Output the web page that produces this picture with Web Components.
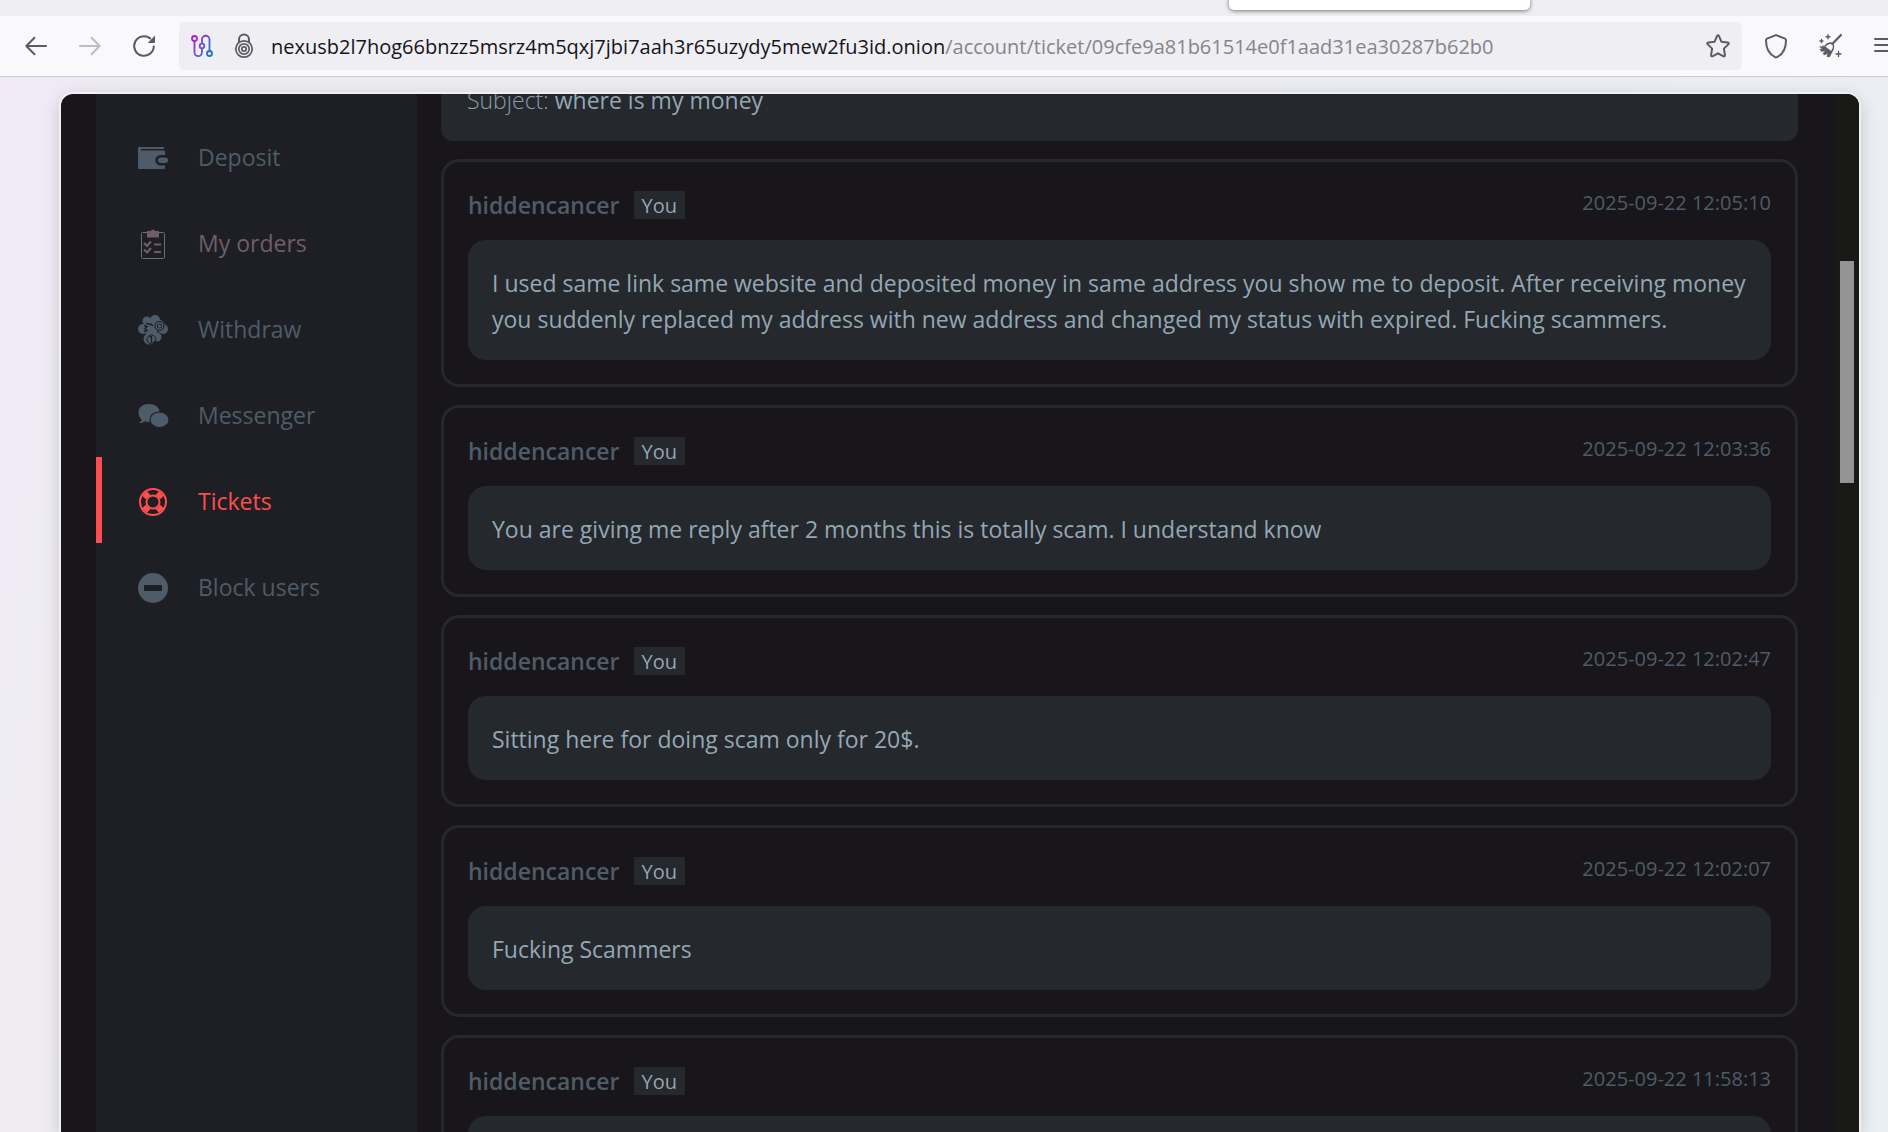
<!DOCTYPE html>
<html lang="en">
<head>
<meta charset="utf-8">
<meta name="viewport" content="width=device-width, initial-scale=1">
<title>Ticket</title>
<style>
    html, body {
        margin: 0;
        height: 100%;
        overflow: hidden;
    }
    body {
        font-family: "Open Sans", "Noto Sans", sans-serif;
        font-size: 23px;
        line-height: 36px;
    }
</style>
</head>
<body>
<browser-window>
    <browser-toolbar slot="toolbar" host="nexusb2l7hog66bnzz5msrz4m5qxj7jbi7aah3r65uzydy5mew2fu3id.onion" path="/account/ticket/09cfe9a81b61514e0f1aad31ea30287b62b0"></browser-toolbar>
    <account-panel>
        <side-menu slot="menu">
            <menu-item icon="wallet" href="#deposit">Deposit</menu-item>
            <menu-item icon="orders" href="#orders" visited>My orders</menu-item>
            <menu-item icon="coins" href="#withdraw">Withdraw</menu-item>
            <menu-item icon="chat" href="#messenger">Messenger</menu-item>
            <menu-item icon="ring" href="#tickets" active>Tickets</menu-item>
            <menu-item icon="block" href="#block">Block users</menu-item>
        </side-menu>
        <ticket-subject>where is my money</ticket-subject>
        <ticket-message author="hiddencancer" date="2025-09-22 12:05:10">I used same link same website and deposited money in same address you show me to deposit. After receiving money you suddenly replaced my address with new address and changed my status with expired. Fucking scammers.</ticket-message>
        <ticket-message author="hiddencancer" date="2025-09-22 12:03:36">You are giving me reply after 2 months this is totally scam. I understand know</ticket-message>
        <ticket-message author="hiddencancer" date="2025-09-22 12:02:47">Sitting here for doing scam only for 20$.</ticket-message>
        <ticket-message author="hiddencancer" date="2025-09-22 12:02:07">Fucking Scammers</ticket-message>
        <ticket-message author="hiddencancer" date="2025-09-22 11:58:13"></ticket-message>
    </account-panel>
</browser-window>

<script>
const icons = {
    back: `<svg width="24" height="24" viewBox="0 0 24 24" fill="none" stroke="currentColor" stroke-width="2" stroke-linecap="round" stroke-linejoin="round"><path d="M22 12H2.500M10.500 3.800L2.300 12l8.200 8.200"/></svg>`,
    forward: `<svg width="24" height="24" viewBox="0 0 24 24" fill="none" stroke="currentColor" stroke-width="2" stroke-linecap="round" stroke-linejoin="round"><path d="M2 12h19.500M13.500 3.800l8.200 8.200-8.200 8.200"/></svg>`,
    reload: `<svg width="24" height="24" viewBox="0 0 24 24"><path d="M21.800 12.500A9.800 9.800 0 1 1 18.200 4.400" fill="none" stroke="currentColor" stroke-width="2" stroke-linecap="round"/><path d="M23 1.500v6.700a.8.8 0 0 1-.8.800h-6.500z" fill="currentColor"/></svg>`,
    circuit: `<svg width="24" height="24" viewBox="0 0 24 24" fill="none" stroke="url(#g)" stroke-width="1.800"><defs><linearGradient id="g" gradientUnits="userSpaceOnUse" x1="2" y1="3" x2="23" y2="21"><stop offset="0" stop-color="#c010d0"/><stop offset=".5" stop-color="#6a55d4"/><stop offset="1" stop-color="#087fae"/></linearGradient></defs><circle cx="4.500" cy="4.500" r="2.500"/><circle cx="12" cy="12" r="2.300"/><circle cx="19.500" cy="19.500" r="2.500"/><path d="M4.500 7v11.500a3.700 3.700 0 0 0 7.400 0V14.300M12 9.700V5.500a3.700 3.700 0 0 1 7.500 0V17"/></svg>`,
    onion: `<svg width="20" height="26" viewBox="0 0 20 26" fill="none" stroke="currentColor" stroke-width="1.700"><path d="M5 9V6.500a5 5 0 0 1 10 0V9" stroke-width="2"/><circle cx="10" cy="16" r="8.200"/><circle cx="10" cy="16" r="5.200"/><circle cx="10" cy="16" r="2.200"/></svg>`,
    star: `<svg width="24" height="24" viewBox="0 0 24 24" fill="none" stroke="currentColor" stroke-width="2" stroke-linejoin="round"><path d="M11 2.200Q12 .4 13 2.200L15.500 7.800 21.600 8.500Q23.600 9 22.200 10.400L17.900 14.600 18.900 20.900Q19 23 17.100 22.200L12 19.300 6.900 22.200Q5 23 5.100 20.900L6.100 14.600 1.800 10.400Q.4 9 2.400 8.500L8.500 7.800z"/></svg>`,
    shield: `<svg width="24" height="26" viewBox="0 0 24 26" fill="none" stroke="currentColor" stroke-width="2" stroke-linejoin="round"><path d="M11.200 2.300Q12 1.900 12.800 2.300L21 5.700Q22 6.200 22 7.300C22 15 19.500 21 12.900 24.200Q12 24.600 11.100 24.200C4.500 21 2 15 2 7.300Q2 6.200 3 5.700z"/></svg>`,
    broom: `<svg width="26" height="26" viewBox="0 0 26 26" fill="none" stroke="currentColor" stroke-linecap="round" stroke-linejoin="round"><path d="M24 2L15.500 10.800" stroke-width="2.200"/><path d="M8.500 12.500C11 9.800 14 9.600 15.500 11s1.300 4.700-1 7.800" stroke-width="1.600"/><path d="M7.500 13l7.500 6-2.500 5-2.500-.5.800-3.500-3.300 2-1.500-1.500 2.500-3L4.500 18.500 3 16.500l2.500-1L3 14z" fill="currentColor" stroke-width=".6"/><path d="M11 1.800v4M9 3.800h4M4.500 6.500v3M3 8h3M21.500 18.500v5M19 21h5" stroke-width="1.400"/></svg>`,
    menu: `<svg width="22" height="24" viewBox="0 0 22 24" fill="none" stroke="currentColor" stroke-width="2" stroke-linecap="round"><path d="M2 5h18M2 11h18M2 17h18"/></svg>`,
    wallet: `<svg width="32" height="32" viewBox="0 0 32 32" fill="currentColor"><path d="M2 5h25v2H4v1.500h23q1 0 1 1V13h-4.500a5.200 5.200 0 0 0 0 10.400H28V26q0 1-1 1H2q-1 0-1-1V6q0-1 1-1z"/><rect x="21" y="15.500" width="10" height="5.500" rx="2.750"/></svg>`,
    orders: `<svg width="32" height="32" viewBox="0 0 32 32" fill="none"><rect x="4.500" y="4.500" width="23" height="26" rx="1" stroke="#5f717f"/><path d="M10 3h4q0-1.500 2-1.500T18 3h4v6.500H10z" fill="currentColor"/><path d="M7 15l3 3 4-4.500M7 21.500l3 3 4-4.500M17 16.500h7M17 24h7" stroke="currentColor" stroke-width="2.200"/></svg>`,
    coins: `<svg width="32" height="32" viewBox="0 0 32 32" fill="currentColor"><circle cx="10" cy="7" r="4.500"/><circle cx="18" cy="6" r="5"/><circle cx="6" cy="15" r="5"/><circle cx="26" cy="15" r="5"/><circle cx="22.500" cy="11" r="5"/><circle cx="14" cy="16" r="6.500"/><circle cx="20" cy="23" r="4.500"/><circle cx="12" cy="25" r="5.500"/><g fill="none" stroke="#1e1f24"><circle cx="22.500" cy="12" r="4.500" stroke-width="1.200"/><circle cx="22.500" cy="12" r="2.200"/><path d="M9 9.500l5 1 2 1M7 11.500l3 1-2 2 2 2-3 1M14.500 22v7M12.500 23.500l2-1.500" stroke-width="1.400"/><circle cx="14.500" cy="25.500" r="4.500"/></g></svg>`,
    chat: `<svg width="32" height="32" viewBox="0 0 32 32" fill="currentColor"><path d="M12 4c6 0 10.500 3.500 10.500 8S18 22 12 22c-1.500 0-3-.2-4-.7-1.500 1.500-4 2-6.500 1.700 2-.8 3-2 3-3.500C2.500 17.500 1.500 15 1.500 12 1.500 7.500 6 4 12 4z"/><path d="M22.500 12c5.500 0 9.500 3.400 9.500 7.700s-4 7.900-9.500 7.900-9.500-3.600-9.500-7.900 4-7.700 9.500-7.700z" stroke="#1e1f24" stroke-width="1.200"/></svg>`,
    ring: `<svg width="32" height="32" viewBox="0 0 32 32" fill="none" stroke="currentColor"><circle cx="16" cy="16" r="13" stroke-width="2"/><circle cx="16" cy="16" r="6.500" stroke-width="2"/><path d="M11 11L7.500 7.500M21 11l3.500-3.500M11 21l-3.500 3.500M21 21l3.500 3.500" stroke-width="6.500"/></svg>`,
    block: `<svg width="32" height="32" viewBox="0 0 32 32"><circle cx="16" cy="16" r="15" fill="currentColor"/><path d="M7 13h18v6H7z" fill="#1e1f24"/></svg>`
};

class BrowserWindow extends HTMLElement {
    constructor() {
        super();
        this.attachShadow({ mode: "open" }).innerHTML = `
        <style>
            :host {
                display: flex;
                flex-direction: column;
                height: 100vh;
                overflow: hidden;
            }
            .tabs {
                position: relative;
                flex: none;
                height: 16px;
                background: #efeef3;
            }
            .popup {
                position: absolute;
                z-index: 1;
                top: -10px;
                right: 358px;
                width: 301px;
                height: 20px;
                border-radius: 5px;
                background: #fff;
                box-shadow: 0 1px 4px rgba(0, 0, 0, 0.5);
            }
            main {
                flex: 1;
                min-height: 0;
                display: flex;
                padding: 17px 29px 0 61px;
                background: linear-gradient(100deg, #f1eaf6 0%, #eeebf6 4%, #eeecf0 8%, #ecedf2 70%, #eaeff4 100%);
            }
        </style>
        <div class="tabs"><div class="popup"></div></div>
        <slot name="toolbar"></slot>
        <main><slot></slot></main>
        `;
    }
}

class BrowserToolbar extends HTMLElement {
    connectedCallback() {
        this.attachShadow({ mode: "open" }).innerHTML = `
        <style>
            * {
                box-sizing: border-box;
            }
            :host {
                box-sizing: border-box;
                display: flex;
                flex: none;
                align-items: center;
                height: 61px;
                padding-left: 9px;
                border-bottom: 1px solid #cccccf;
                background: #f9f9fb;
                color: #5b5b66;
                overflow: hidden;
            }
            button {
                display: flex;
                flex: none;
                align-items: center;
                justify-content: center;
                width: 54px;
                height: 48px;
                padding: 0;
                border: 0;
                background: none;
                color: inherit;
            }
            button:disabled {
                color: #bdbdc2;
            }
            .url {
                display: flex;
                flex: 1;
                align-items: center;
                min-width: 0;
                height: 48px;
                margin-left: 8px;
                padding-left: 2px;
                border-radius: 6px;
                background: #efeef3;
            }
            .url button {
                width: 42px;
            }
            .url .star {
                width: 48px;
            }
            .address {
                flex: 1;
                min-width: 0;
                padding: 2px 0 0 6px;
                overflow: hidden;
                white-space: nowrap;
                font-size: 20px;
                color: #85858b;
            }
            .address b {
                font-weight: 400;
                color: #15141a;
            }
            .tools {
                display: flex;
                flex: none;
                width: 146px;
                padding-left: 7px;
            }
        </style>
        <button aria-label="Back">${icons.back}</button>
        <button aria-label="Forward" disabled>${icons.forward}</button>
        <button aria-label="Reload">${icons.reload}</button>
        <div class="url">
            <button aria-label="Circuit">${icons.circuit}</button>
            <button aria-label="Site information">${icons.onion}</button>
            <div class="address" role="textbox" aria-label="Address" contenteditable="true" spellcheck="false"><b>${this.getAttribute("host")}</b>${this.getAttribute("path")}</div>
            <button class="star" aria-label="Bookmark">${icons.star}</button>
        </div>
        <div class="tools">
            <button aria-label="Security level">${icons.shield}</button>
            <button aria-label="New identity">${icons.broom}</button>
            <button aria-label="Menu">${icons.menu}</button>
        </div>
        `;
    }
}

class AccountPanel extends HTMLElement {
    constructor() {
        super();
        this.attachShadow({ mode: "open" }).innerHTML = `
        <style>
            :host {
                display: flex;
                flex: 1;
                min-width: 0;
                padding-left: 35px;
                border-radius: 12px 12px 0 0;
                background: #18161a;
                box-shadow: 0 0 0 2px #f0eff3, 0 4px 18px rgba(0, 0, 0, 0.2);
                overflow: hidden;
            }
            .thread {
                display: flex;
                flex: 1;
                flex-direction: column;
                gap: 18px;
                min-width: 0;
                margin: -36px 36px 0 24px;
            }
            .scrollbar {
                flex: none;
                width: 14px;
                padding: 167px 5px 0 6px;
                background: #191918;
            }
            .thumb {
                height: 222px;
                background: #949494;
            }
        </style>
        <slot name="menu"></slot>
        <section class="thread"><slot></slot></section>
        <div class="scrollbar"><div class="thumb"></div></div>
        `;
    }
}

class SideMenu extends HTMLElement {
    constructor() {
        super();
        this.attachShadow({ mode: "open" }).innerHTML = `
        <style>
            :host {
                display: block;
                flex: none;
                width: 321px;
                background: #1e1f24;
            }
            nav {
                display: flex;
                flex-direction: column;
                padding-top: 19px;
            }
        </style>
        <nav><slot></slot></nav>
        `;
    }
}

class MenuItem extends HTMLElement {
    connectedCallback() {
        this.attachShadow({ mode: "open" }).innerHTML = `
        <style>
            :host {
                display: block;
                color: #4e5c69;
            }
            :host([visited]) {
                color: #6f5e69;
            }
            :host([active]) {
                color: #ff4d4d;
            }
            a {
                box-sizing: border-box;
                display: flex;
                align-items: center;
                gap: 29px;
                height: 86px;
                padding: 2px 0 0 35px;
                border-left: 6px solid transparent;
                color: inherit;
                text-decoration: none;
            }
            :host([active]) a {
                border-color: #ff4d4d;
            }
            svg {
                display: block;
                margin-top: 2px;
            }
        </style>
        <a href="${this.getAttribute("href")}">${icons[this.getAttribute("icon")]}<span><slot></slot></span></a>
        `;
    }
}

class TicketSubject extends HTMLElement {
    constructor() {
        super();
        this.attachShadow({ mode: "open" }).innerHTML = `
        <style>
            :host {
                display: block;
                padding: 24px 24px 23px 26px;
                border-radius: 12px;
                background: #25282c;
                color: #8b9ba8;
                font-weight: 300;
            }
            strong {
                font-weight: 500;
                color: #94a7b5;
            }
        </style>
        Subject: <strong><slot></slot></strong>
        `;
    }
}

class TicketMessage extends HTMLElement {
    connectedCallback() {
        this.attachShadow({ mode: "open" }).innerHTML = `
        <style>
            :host {
                display: block;
                padding: 24px;
                border: 3px solid #25282c;
                border-radius: 18px;
            }
            header {
                box-sizing: border-box;
                display: flex;
                align-items: center;
                height: 36px;
                margin-bottom: 18px;
                padding-top: 2px;
                color: #4e5c69;
            }
            .author {
                font-weight: 600;
            }
            .you {
                margin-left: 14px;
                padding: 2px 8px 0;
                background: #25282c;
                color: #94a7b5;
                font-size: 20px;
                line-height: 26px;
            }
            time {
                align-self: flex-start;
                margin-left: auto;
                font-size: 20px;
                line-height: 30px;
            }
            .text {
                min-height: 36px;
                padding: 25px 24px 23px;
                border-radius: 18px;
                background: #25282c;
                color: #94a7b5;
            }
        </style>
        <header>
            <span class="author">${this.getAttribute("author")}</span>
            <span class="you">You</span>
            <time>${this.getAttribute("date")}</time>
        </header>
        <div class="text"><slot></slot></div>
        `;
    }
}

customElements.define("browser-window", BrowserWindow);
customElements.define("browser-toolbar", BrowserToolbar);
customElements.define("account-panel", AccountPanel);
customElements.define("side-menu", SideMenu);
customElements.define("menu-item", MenuItem);
customElements.define("ticket-subject", TicketSubject);
customElements.define("ticket-message", TicketMessage);
</script>
</body>
</html>
